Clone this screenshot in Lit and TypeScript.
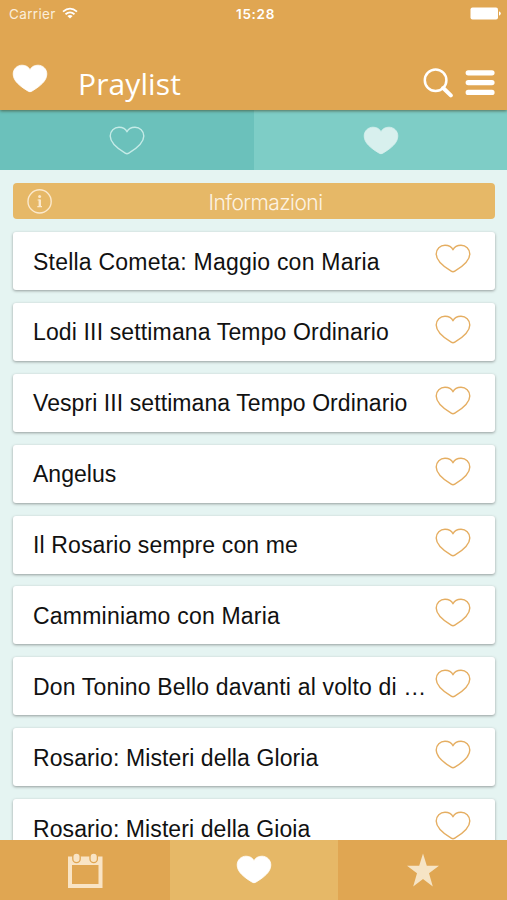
import { LitElement, html, css, svg } from "lit";
import { customElement } from "lit/decorators.js";
import { styleMap } from "lit/directives/style-map.js";

const HEART =
  "M18 5.8C16.5 2.6 13.4 1.2 10 1.2C5.2 1.2 1.2 4.8 1.2 10C1.2 16.6 7.2 21.8 16.2 27.2Q18 28.3 19.8 27.2C28.8 21.8 34.8 16.6 34.8 10C34.8 4.8 30.8 1.2 26 1.2C22.6 1.2 19.5 2.6 18 5.8Z";

const heart = (kind: string) => html`
  <svg class="heart ${kind}" viewBox="0 0 36 29" width="36" height="29">${svg`<path d=${HEART} />`}</svg>
`;

interface Prayer {
  title: string;
  tracking: number;
}

const PRAYERS: Prayer[] = [
  { title: "Stella Cometa: Maggio con Maria", tracking: 0.22 },
  { title: "Lodi III settimana Tempo Ordinario", tracking: 0.14 },
  { title: "Vespri III settimana Tempo Ordinario", tracking: 0.08 },
  { title: "Angelus", tracking: 0.02 },
  { title: "Il Rosario sempre con me", tracking: 0.12 },
  { title: "Camminiamo con Maria", tracking: 0.21 },
  { title: "Don Tonino Bello davanti al volto di …", tracking: 0.17 },
  { title: "Rosario: Misteri della Gloria", tracking: 0.1 },
  { title: "Rosario: Misteri della Gioia", tracking: 0.09 },
];

@customElement("app-root")
export class AppRoot extends LitElement {
  static styles = css`
    :host {
      display: flex;
      flex-direction: column;
      width: 507px;
      height: 900px;
      overflow: hidden;
      background: #e5f4f2;
      font-family: "Liberation Sans", Arial, sans-serif;
    }
    svg { display: block; flex: none; }
    .heart { fill: none; stroke-width: 1.4; stroke-linejoin: round; }
    .solid { fill: #fff; stroke: #fff; stroke-width: 0.8; }
    .soft { fill: #d8f0ee; stroke: #d8f0ee; stroke-width: 0.8; }
    .pale { stroke: #c5ebe7; }
    .gold { stroke: #e5ae62; }
    .top {
      flex: none;
      height: 110px;
      box-sizing: border-box;
      background: #e0a652;
      color: #fff;
      position: relative;
      box-shadow: 0 1px 3px rgba(60, 60, 30, 0.65);
    }
    .status {
      display: grid;
      grid-template-columns: 1fr auto 1fr;
      align-items: center;
      height: 27px;
      padding: 0 6px 0 9px;
      font-family: Inter, sans-serif;
      font-size: 13.5px;
    }
    .carrier { display: flex; align-items: center; gap: 6px; color: #fbeedb; letter-spacing: 0.35px; }
    .clock { font-weight: 600; font-size: 13.5px; letter-spacing: 0.7px; padding-left: 1px; }
    .battery { justify-self: end; }
    .bar {
      display: flex;
      align-items: center;
      box-sizing: border-box;
      height: 83px;
      padding: 28px 12px 0;
    }
    .bar .heart { margin-top: -8px; }
    .title {
      flex: 1;
      margin: 0 0 0 30px;
      padding-top: 2px;
      font: 400 30px/40px "Open Sans", sans-serif;
      letter-spacing: 0.1px;
    }
    .menu { margin-left: 12px; }
    .tabs { flex: none; display: grid; grid-template-columns: 254px 1fr; height: 60px; }
    .tab { display: flex; justify-content: center; align-items: center; background: #6bc1bb; }
    .tab.on { background: #7ecdc6; }
    .list { flex: 1; min-height: 0; overflow: hidden; padding: 13px 12px 0 13px; }
    .info {
      display: flex;
      align-items: center;
      height: 36px;
      margin-bottom: 13px;
      padding-left: 14px;
      border-radius: 4px;
      background: #e6b867;
      color: #fdf3e3;
      font: 300 21px "Inter", sans-serif;
    }
    .info span { flex: 1; text-align: center; padding: 2px 17px 0 0; letter-spacing: -0.55px; }
    .card {
      display: flex;
      align-items: center;
      box-sizing: border-box;
      height: 58px;
      margin-bottom: 12.9px;
      padding: 0 24px 0 20px;
      border-radius: 3px;
      background: #fff;
      box-shadow: 0 1px 3px rgba(0, 0, 0, 0.36);
      color: #111;
      font-size: 23px;
      white-space: nowrap;
    }
    .card .name { flex: 1; min-width: 0; padding-top: 2px; }
    .card .heart { margin-top: -5px; }
    .dock { flex: none; display: grid; grid-template-columns: 170px 168px 1fr; height: 60px; background: #e0a652; }
    .slot { display: flex; align-items: center; justify-content: center; }
    .slot.on { background: #e6b867; }
    .slot .heart { margin-top: -1px; }
  `;

  render() {
    return html`
      <header class="top">
        <div class="status">
          <div class="carrier">
            Carrier
            <svg width="16" height="13" viewBox="0 0 16 13" fill="none" stroke="#fff" stroke-width="1.8">
              <path d="M1 4.6Q8-1.3 15 4.6M3.5 7.3Q8 3.5 12.5 7.3" />
              <path d="M8 11.6L5.4 8.9Q8 6.9 10.6 8.9Z" fill="#fff" stroke="none" />
            </svg>
          </div>
          <div class="clock">15:28</div>
          <svg class="battery" width="31" height="13" viewBox="0 0 31 13" fill="#fff">
            <rect x="0.5" y="0.5" width="27.5" height="12" rx="2" />
            <path d="M29 4.2Q30.8 5 30.8 6.5T29 8.8Z" />
          </svg>
        </div>
        <div class="bar">
          ${heart("solid")}
          <h1 class="title">Praylist</h1>
          <svg width="30" height="30" viewBox="0 0 30 30" fill="none" stroke="#fff">
            <circle cx="12.6" cy="12.3" r="10.8" stroke-width="2.5" />
            <path d="M20.2 20L27.8 27.4" stroke-width="4" stroke-linecap="round" />
          </svg>
          <svg class="menu" width="30" height="26" viewBox="0 0 30 26" stroke="#fff" stroke-width="5.2" stroke-linecap="round">
            <path d="M3.2 2.8H27M3.2 12.6H27M3.2 22.4H27" />
          </svg>
        </div>
      </header>
      <nav class="tabs">
        <div class="tab">${heart("pale")}</div>
        <div class="tab on">${heart("soft")}</div>
      </nav>
      <main class="list">
        <div class="info">
          <svg width="26" height="26" viewBox="0 0 26 26" fill="none" stroke="#fbe9cd" stroke-width="1.4">
            <circle cx="12.6" cy="13.4" r="11.6" />
            <circle cx="12.6" cy="8.6" r="1.5" fill="#fbe9cd" stroke="none" />
            <path d="M10.6 12H13M10.3 18.6H15" stroke-width="1.2" />
            <path d="M12.8 11.5V18.8" stroke-width="2.4" />
          </svg>
          <span>Informazioni</span>
        </div>
        ${PRAYERS.map(
          (p) => html`
            <div class="card">
              <div class="name" style=${styleMap({ letterSpacing: `${p.tracking}px` })}>${p.title}</div>
              ${heart("gold")}
            </div>
          `
        )}
      </main>
      <footer class="dock">
        <div class="slot">
          <svg width="36" height="36" viewBox="0 0 36 36">
            <path fill="#f9e4c5" fill-rule="evenodd" d="M1 4.5H35.5V36H1ZM5 13V32H31.5V13Z" />
            <g fill="#f9e4c5" stroke="#e0a652" stroke-width="1.3">
              <rect x="5.8" y="1" width="7.4" height="9.6" rx="3.7" />
              <rect x="23" y="1" width="7.4" height="9.6" rx="3.7" />
            </g>
          </svg>
        </div>
        <div class="slot on">${heart("solid")}</div>
        <div class="slot">
          <svg width="34" height="34" viewBox="0 0 34 34">
            <path fill="#f6e4c5" d="M17 0.5L20.8 12.8H33L23 20.3L26.8 33.5L17 26L7.2 33.5L11 20.3L1 12.8H13.2Z" />
          </svg>
        </div>
      </footer>
    `;
  }
}
